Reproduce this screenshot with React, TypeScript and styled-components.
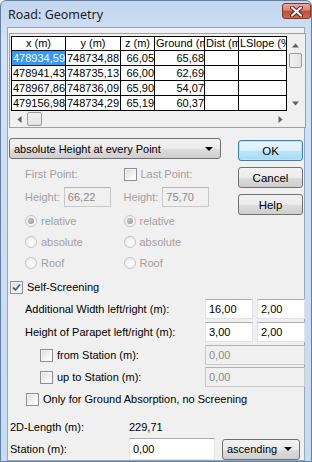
import React from 'react'
import styled, { createGlobalStyle, css } from 'styled-components'

const GlobalStyle = createGlobalStyle`
  html, body {
    margin: 0;
    padding: 0;
    background: #ffffff;
  }
  body {
    font-family: 'Liberation Sans', Arial, sans-serif;
    font-size: 11px;
    color: #000;
  }
`

const rows = [
  ['478934,59', '748734,88', '66,05', '65,68', '', ''],
  ['478941,43', '748735,13', '66,00', '62,69', '', ''],
  ['478967,86', '748736,09', '65,90', '54,07', '', ''],
  ['479156,98', '748734,29', '65,19', '60,37', '', '']
]

const columns = [
  { title: 'x (m)', width: 54, clip: false },
  { title: 'y (m)', width: 55, clip: false },
  { title: 'z (m)', width: 34, clip: false },
  { title: 'Ground (m)', width: 50, clip: true },
  { title: 'Dist (m)', width: 34, clip: true },
  { title: 'LSlope (%)', width: 48, clip: true }
]

const Checkbox = ({ checked }: { checked?: boolean }) => (
  <CheckBoxBox>
    {checked && (
      <svg width="9" height="9" viewBox="0 0 9 9">
        <path d="M1 4.5 L3.5 7 L8 1.5" fill="none" stroke="#4a5f97" strokeWidth="1.8" />
      </svg>
    )}
  </CheckBoxBox>
)

const Radio = ({ checked }: { checked?: boolean }) => (
  <RadioCircle>{checked && <RadioDot />}</RadioCircle>
)

const PointColumn = ({ first, height }: { first: boolean; height: string }) => (
  <PointCol>
    <TitleLine>
      {!first && <Checkbox />}
      <Label $disabled $gap={first ? 0 : 4}>{first ? 'First Point:' : 'Last Point:'}</Label>
    </TitleLine>
    <HeightLine>
      <Label $disabled>Height:</Label>
      <TextBox $w={47} $disabled>{height}</TextBox>
    </HeightLine>
    {['relative', 'absolute', 'Roof'].map((r, i) => (
      <RadioLine key={r}>
        <Radio checked={i === 0} />
        <Label $disabled $gap={4}>{r}</Label>
      </RadioLine>
    ))}
  </PointCol>
)

export default function App() {
  return (
    <>
      <GlobalStyle />
      <Window>
        <TitleBar>
          <Title>Road: Geometry</Title>
          <CloseButton>
            <svg width="13" height="11" viewBox="0 0 13 11">
              <path d="M2 1.5 L11 9.5 M11 1.5 L2 9.5" stroke="#5a1d14" strokeWidth="4" strokeLinecap="round" />
              <path d="M2 1.5 L11 9.5 M11 1.5 L2 9.5" stroke="#ffffff" strokeWidth="2.2" strokeLinecap="round" />
            </svg>
          </CloseButton>
        </TitleBar>
        <Client>
          <GridBox>
            <GridMain>
              <Table>
                <colgroup>
                  {columns.map(c => (
                    <col key={c.title} style={{ width: c.width }} />
                  ))}
                </colgroup>
                <thead>
                  <tr>
                    {columns.map(c => (
                      <HeadCell key={c.title} $clip={c.clip}>{c.title}</HeadCell>
                    ))}
                  </tr>
                </thead>
                <tbody>
                  {rows.map((r, ri) => (
                    <tr key={ri}>
                      {r.map((v, ci) => (
                        <Cell key={ci} $selected={ri === 0 && ci === 0} $right={ci >= 2}>
                          {v}
                        </Cell>
                      ))}
                    </tr>
                  ))}
                </tbody>
              </Table>
              <VScroll>
                <Arrow viewBox="0 0 7 4"><path d="M0 4 L3.5 0 L7 4 Z" fill="#606060" /></Arrow>
                <VThumb />
                <Spacer />
                <Arrow viewBox="0 0 7 4"><path d="M0 0 L3.5 4 L7 0 Z" fill="#606060" /></Arrow>
              </VScroll>
            </GridMain>
            <HScroll>
              <Arrow viewBox="0 0 4 7"><path d="M4 0 L0 3.5 L4 7 Z" fill="#606060" /></Arrow>
              <HThumb />
              <Spacer />
              <Arrow viewBox="0 0 4 7"><path d="M0 0 L4 3.5 L0 7 Z" fill="#606060" /></Arrow>
            </HScroll>
          </GridBox>

          <TopSection>
            <LeftPanel>
              <Combo $w={212}>
                <span>absolute Height at every Point</span>
                <DropArrow />
              </Combo>
              <PointsRow>
                <PointColumn first height="66,22" />
                <PointColumn first={false} height="75,70" />
              </PointsRow>
            </LeftPanel>
            <ButtonCol>
              <Button $default>OK</Button>
              <Button>Cancel</Button>
              <Button>Help</Button>
            </ButtonCol>
          </TopSection>

          <FormRow $indent={2} $h={14} $mt={7}>
            <Checkbox checked />
            <Label $gap={4}>Self-Screening</Label>
          </FormRow>
          <FormRow $indent={17} $h={20} $mt={5}>
            <Label>Additional Width left/right (m):</Label>
            <Fill />
            <TextBox $w={48}>16,00</TextBox>
            <TextBox $w={48} $ml={4}>2,00</TextBox>
          </FormRow>
          <FormRow $indent={17} $h={20} $mt={3}>
            <Label>Height of Parapet left/right (m):</Label>
            <Fill />
            <TextBox $w={48}>3,00</TextBox>
            <TextBox $w={48} $ml={4}>2,00</TextBox>
          </FormRow>
          <FormRow $indent={32} $h={20} $mt={3}>
            <Checkbox />
            <Label $gap={4}>from Station (m):</Label>
            <Fill />
            <TextBox $w={100} $disabled>0,00</TextBox>
          </FormRow>
          <FormRow $indent={32} $h={20} $mt={2}>
            <Checkbox />
            <Label $gap={4}>up to Station (m):</Label>
            <Fill />
            <TextBox $w={100} $disabled>0,00</TextBox>
          </FormRow>
          <FormRow $indent={18} $h={14} $mt={5}>
            <Checkbox />
            <Label $gap={4}>Only for Ground Absorption, no Screening</Label>
          </FormRow>
          <FormRow $indent={2} $h={14} $mt={14}>
            <ValueLabel>2D-Length (m):</ValueLabel>
            <span>229,71</span>
          </FormRow>
          <FormRow $indent={2} $h={22} $mt={4}>
            <ValueLabel>Station (m):</ValueLabel>
            <TextBox $w={86} $h={22}>0,00</TextBox>
            <Combo $w={78} $ml={7}>
              <span>ascending</span>
              <DropArrow />
            </Combo>
          </FormRow>
        </Client>
      </Window>
    </>
  )
}

const Window = styled.div`
  width: 312px;
  height: 462px;
  box-sizing: border-box;
  display: flex;
  flex-direction: column;
  padding: 0 6px 5px 6px;
  border: 1px solid #5f7fa5;
  border-radius: 6px 6px 0 0;
  background: linear-gradient(180deg, #c2d6ef 0%, #d3e2f4 40px, #c7daf0 100%);
`

const TitleBar = styled.div`
  height: 26px;
  flex: none;
  display: flex;
  align-items: flex-start;
  justify-content: space-between;
`

const Title = styled.div`
  font-family: 'Noto Sans', 'Open Sans', sans-serif;
  font-size: 12.5px;
  color: #1e1e1e;
  margin: 5px 0 0 1px;
`

const CloseButton = styled.div`
  width: 29px;
  height: 16px;
  margin: 2px -6px 0 0;
  box-sizing: border-box;
  display: flex;
  align-items: center;
  justify-content: center;
  border: 1px solid #7a3a2e;
  border-radius: 3px;
  background: linear-gradient(180deg, #e9a99b 0%, #d98471 45%, #c24a34 50%, #cf6a4f 100%);
`

const Client = styled.div`
  flex: 1;
  display: flex;
  flex-direction: column;
  background: #f0f0f0;
  border: 1px solid #93a9c4;
`

const GridBox = styled.div`
  margin: 5px 0 0 1px;
  width: 297px;
  height: 95px;
  box-sizing: border-box;
  border: 1px solid #a0a0a0;
  background: #f0f0f0;
  display: flex;
  flex-direction: column;
`

const GridMain = styled.div`
  flex: 1;
  display: flex;
  padding: 2px 0 0 1px;
`

const Table = styled.table`
  border-collapse: collapse;
  table-layout: fixed;
  width: 275px;
  height: 75px;
  align-self: flex-start;
  background: #ffffff;
  font-size: 11px;
`

const cellBase = css`
  border: 1px solid #000;
  padding: 0 1px;
  white-space: nowrap;
  overflow: hidden;
  line-height: 13px;
`

const HeadCell = styled.th<{ $clip: boolean }>`
  ${cellBase};
  height: 11px;
  font-weight: normal;
  text-align: ${p => (p.$clip ? 'left' : 'center')};
  text-overflow: clip;
  background: #ffffff;
`

const Cell = styled.td<{ $selected: boolean; $right: boolean }>`
  ${cellBase};
  height: 14px;
  text-align: ${p => (p.$right ? 'right' : 'left')};
  background: ${p => (p.$selected ? '#3399ff' : '#ffffff')};
  color: ${p => (p.$selected ? '#ffffff' : '#000')};
  padding: 0 0 0 1px;
`

const VScroll = styled.div`
  width: 17px;
  margin-left: auto;
  margin-right: 1px;
  display: flex;
  flex-direction: column;
  align-items: center;
  padding: 6px 0 4px;
`

const HScroll = styled.div`
  height: 16px;
  display: flex;
  align-items: center;
  padding: 0 21px 0 6px;
`

const Arrow = styled.svg`
  width: 7px;
  height: 7px;
  flex: none;
`

const VThumb = styled.div`
  width: 13px;
  height: 15px;
  margin-top: 4px;
  box-sizing: border-box;
  border: 1px solid #9a9a9a;
  border-radius: 2px;
  background: linear-gradient(90deg, #f3f3f3, #e2e2e2);
`

const HThumb = styled.div`
  width: 15px;
  height: 14px;
  margin-left: 4px;
  box-sizing: border-box;
  border: 1px solid #9a9a9a;
  border-radius: 2px;
  background: linear-gradient(180deg, #f3f3f3, #e2e2e2);
`

const Spacer = styled.div`
  flex: 1;
`

const TopSection = styled.div`
  display: flex;
  margin-top: 10px;
`

const LeftPanel = styled.div`
  width: 213px;
  margin-left: 1px;
  display: flex;
  flex-direction: column;
`

const controlFace = css`
  box-sizing: border-box;
  border: 1px solid #707070;
  border-radius: 3px;
  background: linear-gradient(180deg, #f2f2f2 0%, #ebebeb 50%, #dddddd 51%, #cfcfcf 100%);
`

const Combo = styled.div<{ $w: number; $ml?: number }>`
  ${controlFace};
  width: ${p => p.$w}px;
  height: 21px;
  margin-left: ${p => p.$ml || 0}px;
  display: flex;
  align-items: center;
  justify-content: space-between;
  padding: 0 7px 0 4px;
  font-size: 11px;
`

const DropArrow = styled.span`
  width: 0;
  height: 0;
  border-left: 4px solid transparent;
  border-right: 4px solid transparent;
  border-top: 4px solid #000;
`

const PointsRow = styled.div`
  display: flex;
  padding-left: 16px;
`

const PointCol = styled.div`
  width: 109px;
  display: flex;
  flex-direction: column;
`

const TitleLine = styled.div`
  display: flex;
  align-items: center;
  height: 14px;
  margin-top: 8px;
`

const HeightLine = styled.div`
  display: flex;
  align-items: center;
  gap: 4px;
  height: 20px;
  margin-top: 6px;
`

const RadioLine = styled.div`
  display: flex;
  align-items: center;
  height: 20px;
  margin-top: 1px;
  &:nth-child(3) {
    margin-top: 4px;
  }
`

const Label = styled.span<{ $disabled?: boolean; $gap?: number }>`
  color: ${p => (p.$disabled ? '#a0a0a0' : '#000')};
  margin-left: ${p => p.$gap || 0}px;
  white-space: nowrap;
`

const ValueLabel = styled.span`
  width: 119px;
  flex: none;
`

const TextBox = styled.div<{ $w: number; $h?: number; $ml?: number; $disabled?: boolean }>`
  width: ${p => p.$w}px;
  height: ${p => p.$h || 20}px;
  margin-left: ${p => p.$ml || 0}px;
  box-sizing: border-box;
  display: flex;
  align-items: center;
  padding-left: 3px;
  border: 1px solid ${p => (p.$disabled ? '#c9c9c9' : '#e2e3ea')};
  border-top-color: ${p => (p.$disabled ? '#b4b4b4' : '#abadb3')};
  background: ${p => (p.$disabled ? '#f0f0f0' : '#ffffff')};
  color: ${p => (p.$disabled ? '#8a8a8a' : '#000')};
`

const CheckBoxBox = styled.span`
  width: 13px;
  height: 13px;
  flex: none;
  box-sizing: border-box;
  display: flex;
  align-items: center;
  justify-content: center;
  border: 1px solid #8e8f8f;
  background: linear-gradient(135deg, #dcdcdc 0%, #f4f4f4 60%, #ffffff 100%);
  box-shadow: inset 0 0 0 1px #f4f4f4;
`

const RadioCircle = styled.span`
  width: 12px;
  height: 12px;
  flex: none;
  box-sizing: border-box;
  border-radius: 50%;
  border: 1px solid #c5c5c5;
  background: radial-gradient(circle at 60% 60%, #ffffff 0%, #e6e6e6 100%);
  display: flex;
  align-items: center;
  justify-content: center;
`

const RadioDot = styled.span`
  width: 6px;
  height: 6px;
  border-radius: 50%;
  background: radial-gradient(circle at 40% 40%, #c8c8c8, #8a8a8a);
`

const ButtonCol = styled.div`
  display: flex;
  flex-direction: column;
  gap: 6px;
  margin: 2px 0 0 16px;
`

const Button = styled.div<{ $default?: boolean }>`
  ${controlFace};
  width: 65px;
  height: 21px;
  display: flex;
  align-items: center;
  justify-content: center;
  font-size: 11.5px;
  ${p =>
    p.$default &&
    css`
      border-color: #3c7fb1;
      background: linear-gradient(180deg, #eaf6fd 0%, #d9f0fc 50%, #bee6fd 51%, #a7d9f5 100%);
      box-shadow: inset 0 0 0 1px #b9e3fb;
    `}
`

const FormRow = styled.div<{ $indent: number; $h: number; $mt: number }>`
  display: flex;
  align-items: center;
  height: ${p => p.$h}px;
  margin-top: ${p => p.$mt}px;
  padding-left: ${p => p.$indent}px;
  width: 297px;
  box-sizing: border-box;
`

const Fill = styled.div`
  flex: 1;
`
